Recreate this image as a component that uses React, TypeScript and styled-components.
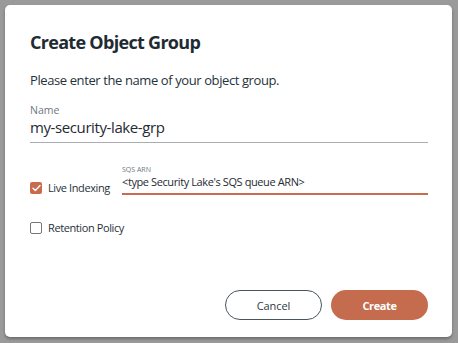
import React from "react";
import styled, { createGlobalStyle } from "styled-components";

const Global = createGlobalStyle`
  html, body { margin: 0; padding: 0; background: #9a9a9a; }
  body { font-family: "Open Sans", "DejaVu Sans", sans-serif; }
`;

const Page = styled.div`
  width: 458px;
  height: 343px;
  padding: 5px 6px 6px 5px;
  box-sizing: border-box;
`;

const Dialog = styled.div`
  background: #fff;
  border-radius: 5px;
  height: 332px;
  box-sizing: border-box;
  padding: 25px 24px 17px 25px;
  display: flex;
  flex-direction: column;
  box-shadow: 0 2px 3px rgba(0, 0, 0, 0.3);
`;

const Title = styled.h1`
  margin: 0;
  font-size: 18px;
  font-weight: 700;
  letter-spacing: -0.7px;
  color: #1e2b33;
  line-height: 24px;
`;

const Intro = styled.p`
  margin: 17px 0 0;
  font-size: 13px;
  letter-spacing: -0.4px;
  color: #26323b;
  line-height: 18px;
`;

const Field = styled.div`
  margin-top: 14px;
  display: flex;
  flex-direction: column;
`;

const Label = styled.label<{ $small?: boolean }>`
  font-size: ${p => (p.$small ? "7px" : "10.5px")};
  color: #70777d;
  line-height: ${p => (p.$small ? "10px" : "14px")};
`;

const Input = styled.div<{ $active?: boolean }>`
  font-size: ${p => (p.$active ? "11px" : "15px")};
  letter-spacing: -0.4px;
  color: #1f2a33;
  border-bottom: ${p => (p.$active ? "2px solid #c96b4e" : "1px solid #a9adb0")};
  padding: ${p => (p.$active ? "0 0 4px" : "1px 0 6px")};
  line-height: ${p => (p.$active ? "14px" : "18px")};
  white-space: nowrap;
`;

const OptionRow = styled.div`
  display: flex;
  align-items: flex-start;
  margin-top: 22px;
`;

const CheckLabel = styled.div`
  display: flex;
  align-items: center;
  gap: 6px;
  font-size: 11px;
  letter-spacing: -0.4px;
  line-height: 14px;
  color: #26323b;
  white-space: nowrap;
`;

const IndexingLabel = styled(CheckLabel)`
  width: 92px;
  margin-top: 16px;
`;

const Retention = styled(CheckLabel)`
  margin-top: 26px;
`;

const Box = styled.span<{ $checked?: boolean }>`
  width: 12px;
  height: 12px;
  flex: none;
  border-radius: 2px;
  box-sizing: border-box;
  display: inline-flex;
  align-items: center;
  justify-content: center;
  background: ${p => (p.$checked ? "#c96b4e" : "#fff")};
  border: ${p => (p.$checked ? "none" : "1.5px solid #70777d")};
`;

const ArnField = styled.div`
  flex: 1;
  display: flex;
  flex-direction: column;
`;

const Actions = styled.div`
  margin-top: auto;
  display: flex;
  justify-content: flex-end;
  gap: 9px;
`;

const Button = styled.button<{ $primary?: boolean }>`
  width: 97px;
  height: 30px;
  border-radius: 15px;
  font-family: inherit;
  font-size: 11px;
  letter-spacing: ${p => (p.$primary ? "-0.4px" : "-0.1px")};
  font-weight: ${p => (p.$primary ? 700 : 400)};
  color: ${p => (p.$primary ? "#fff" : "#2f3a42")};
  background: ${p => (p.$primary ? "#c56c4e" : "#fff")};
  border: ${p => (p.$primary ? "none" : "1px solid #4a545b")};
  padding: 0;
  cursor: pointer;
`;

const Check = () => (
  <svg width="9" height="8" viewBox="0 0 9 8">
    <path d="M1 4.2 L3.4 6.4 L8 1.5" fill="none" stroke="#fff" strokeWidth="1.4" strokeLinecap="round" strokeLinejoin="round" />
  </svg>
);

export default function App() {
  return (
    <>
      <Global />
      <Page>
        <Dialog>
          <Title>Create Object Group</Title>
          <Intro>Please enter the name of your object group.</Intro>
          <Field>
            <Label>Name</Label>
            <Input>my-security-lake-grp</Input>
          </Field>
          <OptionRow>
            <IndexingLabel>
              <Box $checked>
                <Check />
              </Box>
              Live Indexing
            </IndexingLabel>
            <ArnField>
              <Label $small>SQS ARN</Label>
              <Input $active>&lt;type Security Lake's SQS queue ARN&gt;</Input>
            </ArnField>
          </OptionRow>
          <Retention>
            <Box />
            Retention Policy
          </Retention>
          <Actions>
            <Button>Cancel</Button>
            <Button $primary>Create</Button>
          </Actions>
        </Dialog>
      </Page>
    </>
  );
}
